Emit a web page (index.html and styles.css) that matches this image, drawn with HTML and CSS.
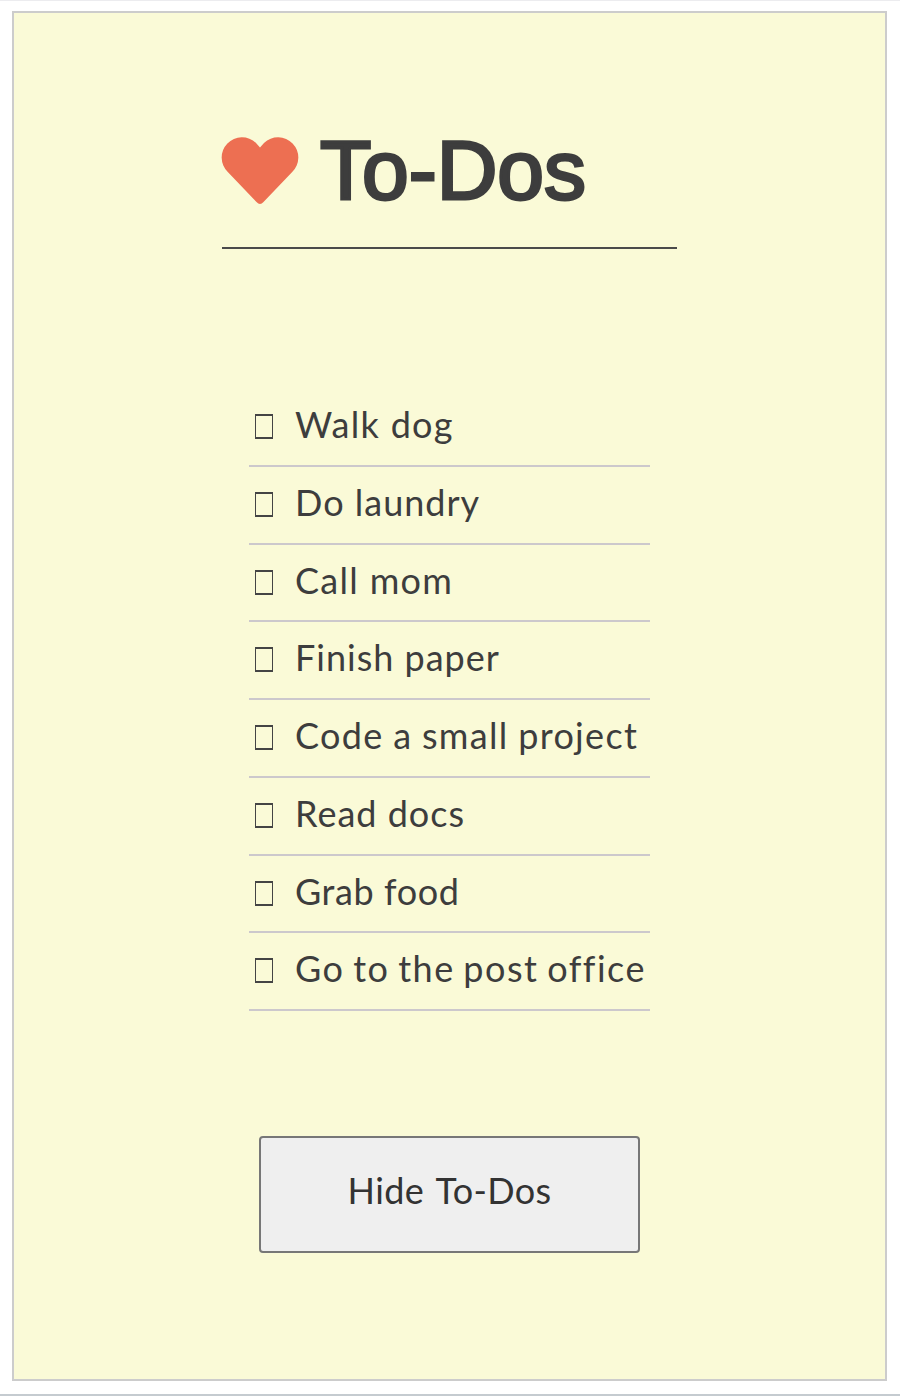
FILE: index.html
```html
<!DOCTYPE html>
<html lang="en">
<head>
<meta charset="utf-8">
<title>To-Dos</title>
<link rel="stylesheet" href="styles.css">
</head>
<body>
<main class="card">
  <h1 class="title">
    <svg class="heart" viewBox="0 0 76 68" aria-hidden="true"><path d="M38 10.5L34 6A20 20 0 0 0 5.8 35L34.5 65Q38 69 41.5 65L70.2 35A20 20 0 0 0 42 6Z"/></svg>
    <span class="title-text">To-Dos</span>
  </h1>
  <ul class="list">
    <li class="item"><span class="box"></span><span class="label wide">Walk dog</span></li>
    <li class="item"><span class="box"></span><span class="label">Do laundry</span></li>
    <li class="item"><span class="box"></span><span class="label wide">Call mom</span></li>
    <li class="item"><span class="box"></span><span class="label">Finish paper</span></li>
    <li class="item"><span class="box"></span><span class="label long">Code a small project</span></li>
    <li class="item"><span class="box"></span><span class="label">Read docs</span></li>
    <li class="item"><span class="box"></span><span class="label tight">Grab food</span></li>
    <li class="item"><span class="box"></span><span class="label longest">Go to the post office</span></li>
  </ul>
  <button class="toggle" type="button">Hide To-Dos</button>
</main>
</body>
</html>
```
FILE: styles.css
```css
* { box-sizing: border-box; }
body {
  margin: 0;
  height: 1396px;
  padding: 11px 13px 0 12px;
  background: #fff;
  border-top: 1px solid #ececef;
  border-bottom: 2px solid #c5cbd0;
  overflow: hidden;
}
.card {
  height: 1370px;
  margin-top: -1px;
  padding-top: 107px;
  display: flex;
  flex-direction: column;
  align-items: center;
  border: 2px solid #ccc;
  background: #fafad7;
  color: #3d3d3d;
}
.title {
  display: flex;
  width: 455px;
  height: 129px;
  margin: 0;
  border-bottom: 2px solid #4a4a4a;
  font: 400 84px/100px "Liberation Sans", Arial, sans-serif;
  -webkit-text-stroke: 3px #3d3d3d;
}
.heart { width: 76px; height: 68px; margin: 17px 22px 0 0; fill: #ed6f52; stroke: none; overflow: visible; }
.title-text { white-space: nowrap; }
.list {
  width: 401px;
  margin: 140px 0 0;
  padding: 0;
  list-style: none;
  font: 36px/70px Lato, sans-serif;
}
.item {
  display: flex;
  align-items: flex-start;
  height: 77.75px;
  padding-left: 6px;
  border-bottom: 2px solid #ccc8cc;
}
.box { width: 18px; height: 25px; margin: 25px 22px 0 0; border: 1px solid #444; border-width: 2px 1px; }
.label { white-space: nowrap; letter-spacing: 1px; }
.wide { letter-spacing: 1.3px; }
.tight { letter-spacing: 0.6px; }
.long { letter-spacing: 1.33px; word-spacing: -1px; }
.longest { letter-spacing: 1.5px; word-spacing: -2px; }
.toggle {
  width: 381px;
  height: 117px;
  margin-top: 125px;
  padding: 0 0 9px;
  border: 2px solid #777;
  border-radius: 4px;
  background: #efefef;
  color: #333;
  font: 36px/1 Lato, sans-serif;
  letter-spacing: 0.35px;
  word-spacing: 3px;
}
```
